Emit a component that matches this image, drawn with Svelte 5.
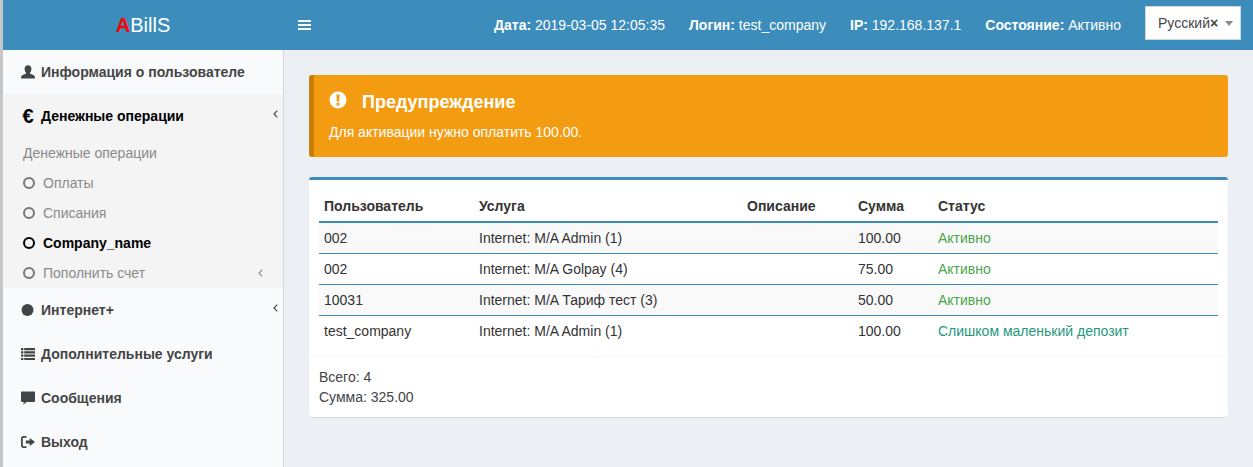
<script>
  const rows = [
    { user: '002', service: 'Internet: M/A Admin (1)', sum: '100.00', status: 'Активно', cls: 'ok' },
    { user: '002', service: 'Internet: M/A Golpay (4)', sum: '75.00', status: 'Активно', cls: 'ok' },
    { user: '10031', service: 'Internet: M/A Тариф тест (3)', sum: '50.00', status: 'Активно', cls: 'ok' },
    { user: 'test_company', service: 'Internet: M/A Admin (1)', sum: '100.00', status: 'Слишком маленький депозит', cls: 'low' }
  ];
</script>

<div class="page">
  <header class="topbar">
    <div class="logo"><b>A</b>BillS</div>
    <div class="burger"><i></i><i></i><i></i></div>
    <div class="info">
      <span><b>Дата:</b> 2019-03-05 12:05:35</span>
      <span><b>Логин:</b> test_company</span>
      <span><b>IP:</b> 192.168.137.1</span>
      <span><b>Состояние:</b> Активно</span>
    </div>
    <div class="lang">
      <span class="lang-name">Русский</span><span class="lang-x">×</span><span class="caret"></span>
    </div>
  </header>

  <div class="body">
    <aside class="sidebar">
      <div class="item">
        <svg class="ico" viewBox="0 0 14 14"><path d="M0 13.5 C0 11 1 10.2 3 9.6 L5 8.6 C5.2 8.2 5 7.8 4.6 7.2 C3.9 6.2 3.6 5.2 3.6 3.8 C3.6 1.5 5 .3 7 .3 C9 .3 10.4 1.5 10.4 3.8 C10.4 5.2 10.1 6.2 9.4 7.2 C9 7.8 8.8 8.2 9 8.6 L11 9.6 C13 10.2 14 11 14 13.5 Z" fill="#444"/></svg>
        Информация о пользователе
      </div>
      <div class="group">
        <div class="item open">
          <span class="euro">€</span>
          Денежные операции
          <svg class="chev" viewBox="0 0 5 8"><path d="M4.300 .7 1 4l3.300 3.300" fill="none" stroke="#444" stroke-width="1.100"/></svg>
        </div>
        <div class="sub">Денежные операции</div>
        <div class="sub"><span class="ring"></span>Оплаты</div>
        <div class="sub"><span class="ring"></span>Списания</div>
        <div class="sub cur"><span class="ring"></span>Company_name</div>
        <div class="sub"><span class="ring"></span>Пополнить счет<svg class="chev grey" viewBox="0 0 5 8"><path d="M4.300 .7 1 4l3.300 3.300" fill="none" stroke="#8a8a8a" stroke-width="1.100"/></svg></div>
      </div>
      <div class="item">
        <svg class="ico" viewBox="0 0 14 14"><circle cx="6.500" cy="7" r="6" fill="#444"/></svg>
        Интернет+
        <svg class="chev" viewBox="0 0 5 8"><path d="M4.300 .7 1 4l3.300 3.300" fill="none" stroke="#444" stroke-width="1.100"/></svg>
      </div>
      <div class="item">
        <svg class="ico" viewBox="0 0 14 14" fill="#444"><path d="M0 1h2.400v2.200H0zM3.200 1H14v2.200H3.200zM0 4.300h2.400v2.200H0zM3.200 4.300H14v2.200H3.200zM0 7.600h2.400v2.200H0zM3.200 7.600H14v2.200H3.200zM0 10.900h2.400v2.200H0zM3.200 10.900H14v2.200H3.200z"/></svg>
        Дополнительные услуги
      </div>
      <div class="item">
        <svg class="ico" viewBox="0 0 14 14"><path d="M1 .5h12a1 1 0 0 1 1 1v8.500a1 1 0 0 1-1 1H5.500L2.200 13.800 2.800 11H1a1 1 0 0 1-1-1V1.500a1 1 0 0 1 1-1z" fill="#444"/></svg>
        Сообщения
      </div>
      <div class="item">
        <svg class="ico" viewBox="0 0 14 14" fill="#444"><path d="M5.500 1H2.400C1 1 0 2 0 3.400v7.200C0 12 1 13 2.400 13h3.100v-1.800H2.800c-.6 0-1-.4-1-1V3.800c0-.6.4-1 1-1h2.700z"/><path d="M8.700 3 14 7 8.700 11V8.600H4.800V5.400h3.900z"/></svg>
        Выход
      </div>
    </aside>

    <main class="content">
      <section class="alert">
        <h4>
          <svg class="alert-ico" viewBox="0 0 18 18"><circle cx="9" cy="9" r="8.500" fill="#fff"/><path d="M7.400 3.500h3.200l-.4 7H7.800zM7.500 11.700h3v2.800h-3z" fill="#f39c12"/></svg>
          Предупреждение
        </h4>
        <p>Для активации нужно оплатить 100.00.</p>
      </section>

      <section class="box">
        <div class="box-body">
          <table>
            <thead>
              <tr>
                <th class="c1">Пользователь</th>
                <th class="c2">Услуга</th>
                <th class="c3">Описание</th>
                <th class="c4">Сумма</th>
                <th>Статус</th>
              </tr>
            </thead>
            <tbody>
              {#each rows as r}
                <tr>
                  <td>{r.user}</td>
                  <td>{r.service}</td>
                  <td></td>
                  <td>{r.sum}</td>
                  <td class={r.cls}>{r.status}</td>
                </tr>
              {/each}
            </tbody>
          </table>
        </div>
        <div class="box-footer">
          <div>Всего: 4</div>
          <div>Сумма: 325.00</div>
        </div>
      </section>
    </main>
  </div>
</div>

<style>
  :global(body) {
    margin: 0;
    background: #c6c6c6;
  }
  .page {
    height: 467px;
    overflow: hidden;
    margin-left: 3px;
    background: #ecf0f5;
    font: 14px/20px "Liberation Sans", Arial, sans-serif;
    color: #333;
    display: flex;
    flex-direction: column;
    position: relative;
  }
  .topbar {
    height: 50px;
    flex: none;
    background: #3c8dbc;
    color: #fff;
    display: flex;
    align-items: center;
  }
  .logo {
    width: 280px;
    flex: none;
    text-align: center;
    font-size: 20px;
    line-height: 50px;
  }
  .logo b {
    color: #f00;
  }
  .burger {
    margin-left: 15px;
    width: 13px;
    display: flex;
    flex-direction: column;
    gap: 2px;
  }
  .burger i {
    display: block;
    height: 2px;
    background: #fff;
  }
  .info {
    margin-left: auto;
    display: flex;
    gap: 24px;
    margin-right: 24px;
  }
  .lang {
    width: 96px;
    height: 34px;
    box-sizing: border-box;
    margin-right: 12px;
    margin-top: -4px;
    border: 1px solid #d2d6de;
    background: #fff;
    color: #444;
    display: flex;
    align-items: center;
    padding-left: 12px;
  }
  .lang-x {
    font-weight: 700;
    font-size: 14px;
    color: #444;
  }
  .caret {
    margin-left: 7px;
    border-top: 5px solid #888;
    border-left: 4px solid transparent;
    border-right: 4px solid transparent;
  }
  .body {
    flex: 1;
    display: flex;
    min-height: 0;
  }
  .sidebar {
    width: 280px;
    flex: none;
    background: #f9fafc;
    border-right: 1px solid #d2d6de;
  }
  .item {
    height: 44px;
    padding-left: 18px;
    display: flex;
    align-items: center;
    font-weight: 700;
    color: #444;
    position: relative;
  }
  .ico {
    width: 14px;
    height: 14px;
    margin-right: 6px;
    flex: none;
  }
  .euro {
    width: 14px;
    margin-right: 6px;
    margin-top: -1px;
    font-size: 20px;
    font-weight: 700;
    color: #000;
    text-align: center;
  }
  .group {
    background: #f4f4f5;
    height: 194px;
  }
  .open {
    color: #000;
  }
  .chev {
    position: absolute;
    right: 5px;
    top: 16px;
    width: 5px;
    height: 8px;
  }
  .chev.grey {
    right: 20px;
    top: 11px;
  }
  .sub {
    height: 30px;
    padding-left: 20px;
    display: flex;
    align-items: center;
    color: #8a8a8a;
    position: relative;
  }
  .ring {
    width: 12px;
    height: 12px;
    box-sizing: border-box;
    border: 2px solid #777;
    border-radius: 50%;
    margin-right: 8px;
  }
  .cur {
    color: #000;
    font-weight: 700;
  }
  .cur .ring {
    border-color: #000;
  }
  .content {
    flex: 1;
    padding: 25px 25px 0;
    min-width: 0;
  }
  .alert {
    height: 82px;
    box-sizing: border-box;
    background: #f39c12;
    border-left: 5px solid #c87f0a;
    border-radius: 3px;
    color: #fff;
    padding: 17px 15px 15px;
    margin-bottom: 20px;
  }
  .alert h4 {
    margin: 0 0 10px;
    font-size: 18px;
    line-height: 20px;
    font-weight: 700;
    display: flex;
    align-items: center;
  }
  .alert-ico {
    width: 18px;
    height: 18px;
    margin-right: 15px;
    margin-top: -4px;
  }
  .alert p {
    margin: 0;
  }
  .box {
    background: #fff;
    border-top: 3px solid #3c8dbc;
    border-radius: 3px;
    box-shadow: 0 1px 1px rgba(0, 0, 0, 0.1);
    height: 240px;
    box-sizing: border-box;
  }
  .box-body {
    padding: 11px 10px 10px;
    height: 176px;
    box-sizing: border-box;
  }
  table {
    width: 100%;
    border-collapse: collapse;
    table-layout: fixed;
  }
  th {
    text-align: left;
    font-weight: 700;
    height: 30px;
    padding: 0 5px;
    border-bottom: 2px solid #3c8dbc;
  }
  td {
    height: 30px;
    padding: 0 5px;
    border-bottom: 1px solid #3c8dbc;
  }
  tbody tr:nth-child(odd) {
    background: #f9f9f9;
  }
  tbody tr:last-child td {
    border-bottom: 0;
  }
  tbody tr:last-child {
    background: #fff;
  }
  .c1 {
    width: 145px;
  }
  .c2 {
    width: 258px;
  }
  .c3 {
    width: 101px;
  }
  .c4 {
    width: 70px;
  }
  .ok {
    color: #4ba54b;
  }
  .low {
    color: #1d9a7c;
  }
  .box-footer {
    border-top: 1px solid #f4f4f4;
    padding: 10px;
    color: #444;
  }
</style>
